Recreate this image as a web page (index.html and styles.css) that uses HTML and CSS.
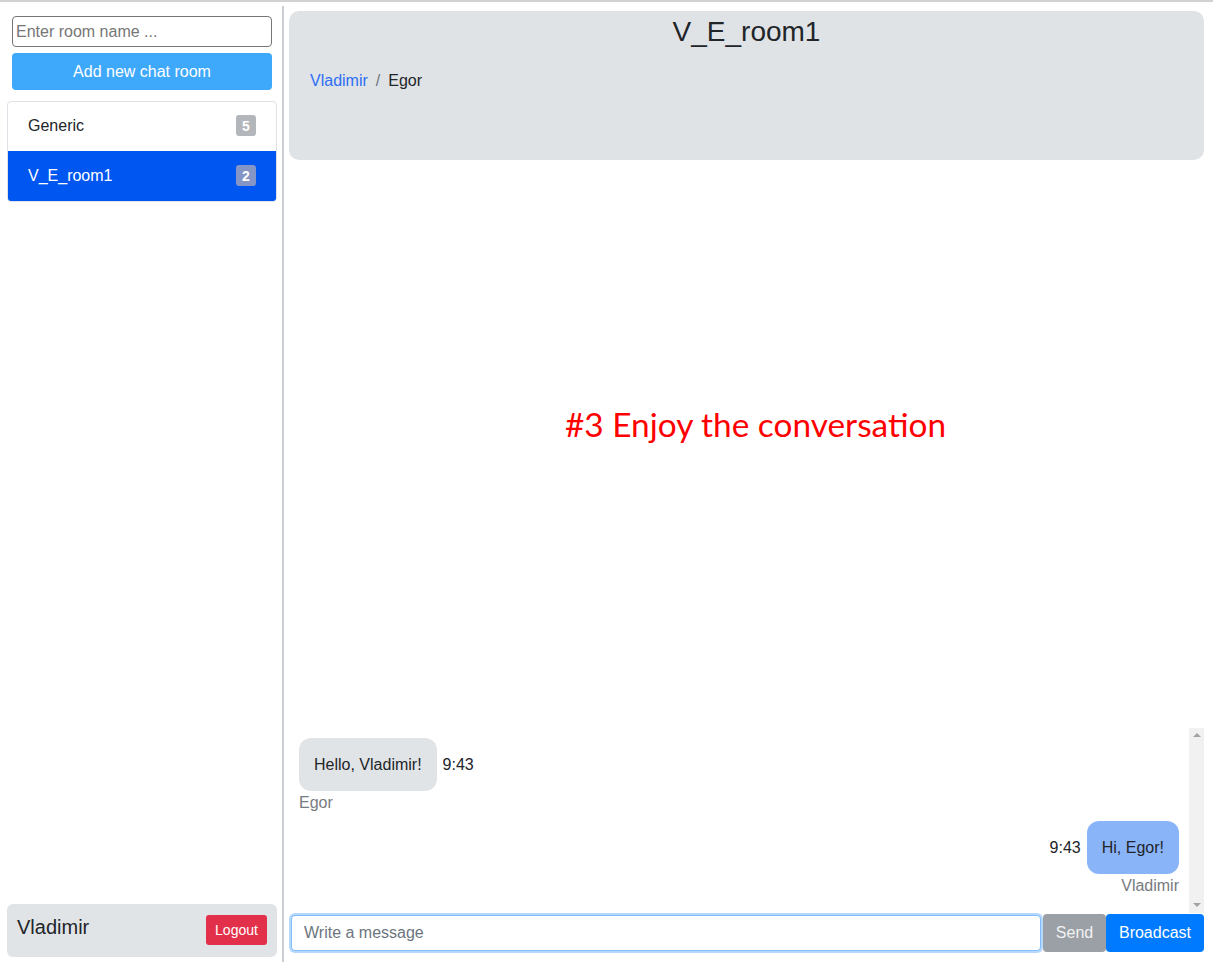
FILE: index.html
```html
<!DOCTYPE html>
<html>
<head>
<meta charset="utf-8">
<link rel="stylesheet" href="styles.css">
</head>
<body>
<div class="app">
  <aside class="sidebar">
    <input class="room-input" type="text" placeholder="Enter room name ...">
    <button class="add-btn">Add new chat room</button>
    <ul class="rooms">
      <li class="room"><span>Generic</span><span class="badge">5</span></li>
      <li class="room active"><span>V_E_room1</span><span class="badge">2</span></li>
    </ul>
    <div class="user-card">
      <span class="user-name">Vladimir</span>
      <button class="logout">Logout</button>
    </div>
  </aside>
  <div class="divider"></div>
  <main class="chat">
    <header class="chat-header">
      <h1 class="room-title">V_E_room1</h1>
      <nav class="crumbs"><a class="crumb-link">Vladimir</a><span class="sep">/</span><span class="crumb">Egor</span></nav>
    </header>
    <div class="spacer"></div>
    <div class="messages">
      <div class="msg-list">
        <div class="msg">
          <div class="msg-row">
            <div class="bubble">Hello, Vladimir!</div>
            <span class="time">9:43</span>
          </div>
          <div class="author">Egor</div>
        </div>
        <div class="msg mine">
          <div class="msg-row">
            <span class="time">9:43</span>
            <div class="bubble">Hi, Egor!</div>
          </div>
          <div class="author">Vladimir</div>
        </div>
      </div>
      <div class="scrollbar">
        <span class="arrow up"></span>
        <span class="arrow down"></span>
      </div>
    </div>
    <div class="composer">
      <input class="msg-input" type="text" placeholder="Write a message">
      <button class="send">Send</button>
      <button class="broadcast">Broadcast</button>
    </div>
  </main>
</div>
<div class="annotation">#3 Enjoy the conversation</div>
</body>
</html>
```

FILE: styles.css
```css
* { box-sizing: border-box; }
html, body { margin: 0; padding: 0; }
body {
  font-family: "Liberation Sans", Arial, sans-serif;
  color: #212529;
  background: #fff;
  position: relative;
}
.app {
  display: flex;
  height: 977px;
  border-top: 2px solid #d2d2d2;
}
.sidebar {
  width: 270px;
  margin-left: 7px;
  padding: 14px 0 20px;
  display: flex;
  flex-direction: column;
}
.room-input {
  margin: 0 5px;
  height: 31px;
  border: 1px solid #767676;
  border-radius: 4px;
  padding: 0 3px;
  font: 16px "Liberation Sans", Arial, sans-serif;
}
.room-input::placeholder { color: #767676; }
.add-btn {
  margin: 6px 5px 0;
  height: 37px;
  border: none;
  border-radius: 4px;
  background: #3ea8fa;
  color: #fff;
  font: 16px "Liberation Sans", Arial, sans-serif;
}
.rooms {
  list-style: none;
  margin: 11px 0 0;
  padding: 0;
  border: 1px solid #dfe2e6;
  border-radius: 4px;
  overflow: hidden;
}
.room {
  height: 49px;
  display: flex;
  align-items: center;
  justify-content: space-between;
  padding: 0 20px 2px 20px;
  font-size: 16px;
}
.room + .room { height: 50px; padding-bottom: 1px; }
.room.active { background: #0056f0; color: #fff; }
.badge {
  width: 20px;
  height: 21px;
  border-radius: 3px;
  background: #b3b6ba;
  color: #fff;
  font-size: 14px;
  font-weight: bold;
  display: flex;
  align-items: center;
  justify-content: center;
}
.room.active .badge { background: #8595c6; }
.user-card {
  margin-top: auto;
  height: 53px;
  background: #e1e4e7;
  border-radius: 6px;
  display: flex;
  align-items: center;
  justify-content: space-between;
  padding: 0 10px 0 10px;
}
.user-name { font-size: 20px; margin-top: -6px; }
.logout {
  height: 30px;
  width: 61px;
  margin-top: -2px;
  border: none;
  border-radius: 3px;
  background: #e3304a;
  color: #fff;
  font: 14px "Liberation Sans", Arial, sans-serif;
}
.divider {
  width: 2px;
  margin: 4px 0 15px 5px;
  background: #cbcfd3;
}
.chat {
  width: 915px;
  margin-left: 5px;
  padding: 9px 0 25px;
  display: flex;
  flex-direction: column;
}
.chat-header {
  height: 149px;
  background: #e0e3e6;
  border-radius: 10px;
  padding-top: 4px;
}
.room-title {
  margin: 0;
  text-align: center;
  font-size: 28px;
  font-weight: normal;
  line-height: 34px;
}
.crumbs {
  margin-top: 22px;
  padding-left: 21px;
  font-size: 16px;
  line-height: 20px;
  display: flex;
}
.crumb-link { color: #2d6ef5; }
.sep { color: #6c757d; margin: 0 8px; }
.spacer { flex: 1; }
.messages {
  height: 185px;
  display: flex;
}
.msg-list {
  flex: 1;
  overflow: hidden;
  padding: 10px 10px 0;
}
.scrollbar {
  width: 15px;
  background: #f1f1f1;
  display: flex;
  flex-direction: column;
  justify-content: space-between;
  align-items: center;
  padding: 5px 0 6px;
}
.arrow {
  width: 0;
  height: 0;
  border-left: 4px solid transparent;
  border-right: 4px solid transparent;
}
.arrow.up { border-bottom: 4px solid #a3a3a3; }
.arrow.down { border-top: 4px solid #a3a3a3; }
.msg { display: flex; flex-direction: column; align-items: flex-start; margin-bottom: 8px; }
.msg.mine { align-items: flex-end; }
.msg-row { display: flex; align-items: center; gap: 6px; }
.bubble {
  padding: 16px 15px;
  line-height: 21px;
  font-size: 16px;
  border-radius: 12px;
  background: #e1e4e7;
}
.mine .bubble { background: #8ab4f8; }
.time { font-size: 16px; }
.author { color: #777b80; font-size: 16px; line-height: 20px; margin-top: 2px; }
.composer {
  height: 39px;
  display: flex;
  align-items: center;
}
.msg-input {
  flex: 1;
  height: 36px;
  margin: 0 2px;
  border: 1px solid #80bdff;
  border-radius: 4px;
  box-shadow: 0 0 0 2px #b5d8fc;
  padding: 0 12px;
  font: 16px "Liberation Sans", Arial, sans-serif;
  outline: none;
}
.msg-input::placeholder { color: #6c757d; }
.send, .broadcast {
  height: 38px;
  border: none;
  border-radius: 4px;
  color: #fff;
  font: 16px "Liberation Sans", Arial, sans-serif;
}
.send { width: 63px; background: #9aa0a6; color: #f2f2f2; }
.broadcast { width: 98px; background: #007bff; }
.annotation {
  position: absolute;
  left: 565px;
  top: 404px;
  color: #ff0000;
  font-family: "Lato", sans-serif;
  font-size: 33.4px;
  line-height: 40px;
  white-space: nowrap;
}
```
